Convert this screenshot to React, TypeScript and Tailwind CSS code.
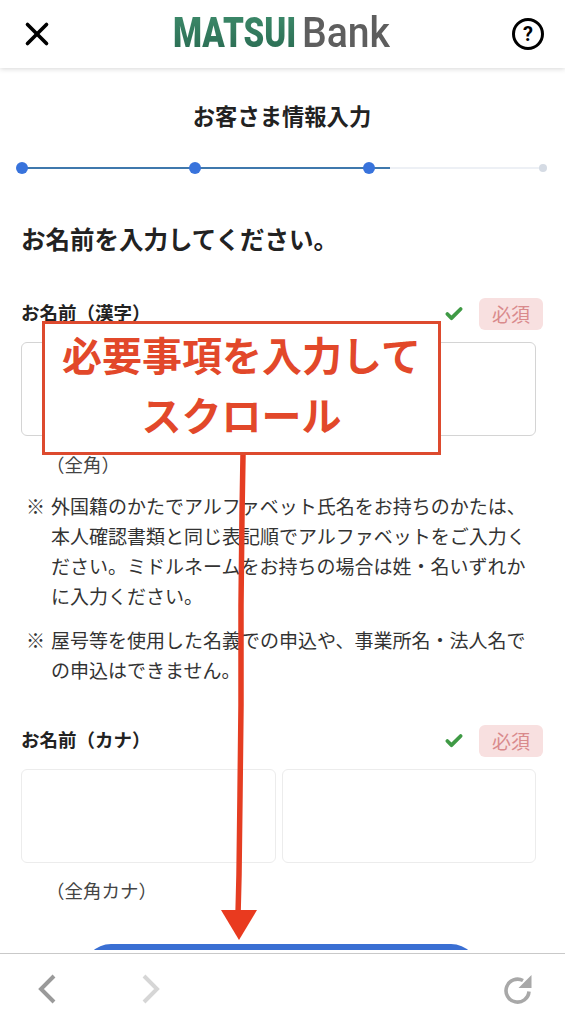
import { X, Check } from 'lucide-react'

const jp = 'font-["Noto_Sans_CJK_JP","Noto_Sans",sans-serif]'

function FieldHead({ label }: { label: string }) {
  return (
    <div className="flex items-center justify-between h-8">
      <span className="text-[18.5px] font-bold text-[#222] pb-[2px]">{label}</span>
      <div className="flex items-center gap-[15px] mr-px">
        <Check size={20} strokeWidth={4.5} className="text-[#3f9a45]" />
        <span className="w-16 h-8 rounded-md bg-[#f8e0e0] text-[#d98a8c] text-[19px] flex items-center justify-center">必須</span>
      </div>
    </div>
  )
}

function Note({ lines }: { lines: string[] }) {
  return (
    <div className="flex pl-[5px] text-[19px] leading-[30px] text-[#333]">
      <span className="w-[25px] shrink-0">※</span>
      <div>
        {lines.map(l => <div key={l} className="whitespace-nowrap">{l}</div>)}
      </div>
    </div>
  )
}

export default function App() {
  return (
    <div className={`${jp} relative w-[565px] h-[1024px] bg-white overflow-hidden flex flex-col`}>
      <header className="h-[68px] shrink-0 flex items-center justify-between pl-[18px] pr-[21px] shadow-[0_1px_5px_rgba(0,0,0,0.16)] z-10 bg-white">
        <X size={38} strokeWidth={2.3} className="text-black" />
        <div className="flex items-center gap-2 font-['Roboto',sans-serif] text-[43px] leading-none -mt-[3px] ml-[-8px]">
          <span className="block w-[121px]">
            <span className="inline-block origin-left scale-x-[0.77] font-black bg-gradient-to-b from-[#3d8b6b] to-[#2a6b52] bg-clip-text text-transparent">MATSUI</span>
          </span>
          <span className="block w-[86px]">
            <span className="inline-block origin-left scale-x-[0.91] font-medium text-[#5e5e5e]">Bank</span>
          </span>
        </div>
        <div className="w-8 h-8 rounded-full border-[3px] border-black flex items-center justify-center text-[20px] font-bold text-black font-['Roboto',sans-serif]">?</div>
      </header>

      <main className="flex-1 overflow-hidden px-[21px] pt-[32px]">
        <h1 className="text-center text-[22.3px] leading-[30px] font-bold text-[#222] -ml-px">お客さま情報入力</h1>

        <div className="relative h-3 mt-[32px] w-[531px] -ml-[5px] flex items-center">
          <div className="w-full h-[2px] ml-[5px] bg-[#edf0f5] flex">
            <div className="w-[369px] bg-[#3f78ad]" />
          </div>
          <div className="absolute inset-0 flex items-center">
            <span className="w-3 h-3 shrink-0 rounded-full bg-[#3873dc]" />
            <span className="w-3 h-3 shrink-0 rounded-full bg-[#3873dc] ml-[161px]" />
            <span className="w-3 h-3 shrink-0 rounded-full bg-[#3873dc] ml-[162px]" />
            <span className="w-2 h-2 shrink-0 rounded-full bg-[#d5dbe4] ml-[164px]" />
          </div>
        </div>

        <h2 className="mt-[48px] text-[24.5px] leading-[34px] font-bold text-[#222]">お名前を入力してください。</h2>

        <div className="mt-[42px]">
          <FieldHead label="お名前（漢字）" />
        </div>
        <div className="mt-3 h-[94px] w-[515px] rounded-md border border-[#d4d4d4]" />
        <p className="mt-[15px] pl-[25px] text-[18.5px] leading-[26px] text-[#444]">（全角）</p>

        <div className="mt-[14px]">
          <Note lines={['外国籍のかたでアルファベット氏名をお持ちのかたは、', '本人確認書類と同じ表記順でアルファベットをご入力く', 'ださい。ミドルネームをお持ちの場合は姓・名いずれか', 'に入力ください。']} />
        </div>
        <div className="mt-[14px]">
          <Note lines={['屋号等を使用した名義での申込や、事業所名・法人名で', 'の申込はできません。']} />
        </div>

        <div className="mt-[40px]">
          <FieldHead label="お名前（カナ）" />
        </div>
        <div className="mt-[12px] flex gap-[6px] w-[515px]">
          <div className="flex-1 h-[94px] rounded-md border border-[#ececec]" />
          <div className="flex-1 h-[94px] rounded-md border border-[#ececec]" />
        </div>
        <p className="mt-[14px] pl-[25px] text-[18.5px] leading-[26px] text-[#444]">（全角カナ）</p>
        <div className="mt-[41px] ml-[62px] w-[396px] h-14 rounded-t-[28px] bg-[#3a6fd3]" />
      </main>

      <footer className="h-[71px] shrink-0 z-10 bg-white border-t border-[#c9c9c9] flex items-center pl-[37px] pr-[32px] shadow-[0_-3px_0_#fff]">
        <svg width="19" height="30" viewBox="0 0 19 30" className="mb-[1px]">
          <polyline points="17,2 4,15 17,28" fill="none" stroke="#9a9a9a" strokeWidth="4" />
        </svg>
        <svg width="19" height="30" viewBox="0 0 19 30" className="ml-[86px] mb-[1px]">
          <polyline points="2,2 15,15 2,28" fill="none" stroke="#d6d6d6" strokeWidth="4" />
        </svg>
        <svg width="30" height="30" viewBox="0 0 30 30" className="ml-auto mb-[1px]">
          <path d="M26 17.5 A11.5 11.5 0 1 1 20 6.5" fill="none" stroke="#a8a8a8" strokeWidth="3.6" />
          <path d="M28.5 1 L28.5 14 L15.5 14 Z" fill="#a8a8a8" />
        </svg>
      </footer>

      {/* red annotation laid over the page */}
      <div className="absolute z-20 left-[42px] top-[321px] w-[399px] h-[134px] border-[3px] border-[#dd4a2e] bg-white flex flex-col items-center justify-center pb-2 text-[#e2482a] text-[40px] font-bold">
        <div className="leading-[60px]">必要事項を入力して</div>
        <div className="leading-[60px]">スクロール</div>
      </div>
      <svg className="absolute z-20 left-[215px] top-[455px]" width="50" height="486" viewBox="0 0 50 486">
        <path d="M28 0 L27 60 L26 150 L26 250 L25 340 L24 420 L23 460" stroke="#e53d22" strokeWidth="5.5" fill="none" />
        <path d="M6 455 L42 455 L24 485 Z" fill="#e93a1f" />
      </svg>
    </div>
  )
}
